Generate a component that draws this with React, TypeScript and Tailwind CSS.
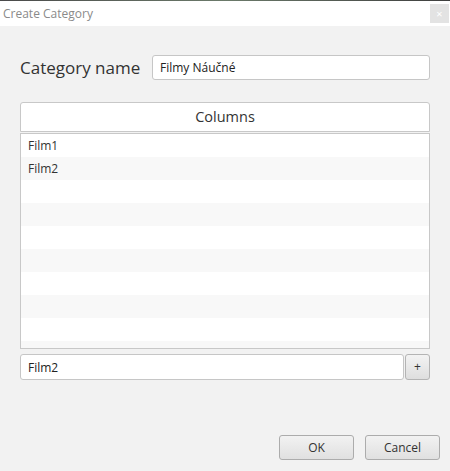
import React, { useState } from 'react';

const rows = ['Film1', 'Film2', '', '', '', '', '', '', '', ''];

export default function App() {
  const [name, setName] = useState('Filmy Náučné');
  const [column, setColumn] = useState('Film2');

  return (
    <div
      className="w-[450px] h-[471px] bg-[#f2f2f2] flex flex-col overflow-hidden"
      style={{ fontFamily: '"Open Sans", "Noto Sans", sans-serif' }}
    >
      {/* window chrome */}
      <div className="h-px bg-gradient-to-r from-[#4a4a4a] via-[#6b7a6a] to-[#3e3e3e]" />
      <div className="h-[25px] bg-white flex items-center justify-between pl-[3px] pr-px">
        <span className="text-[12px] text-[#8a8a8a]">Create Category</span>
        <button className="w-[19px] h-[19px] bg-[#e3e3e3] text-white text-[11px] leading-none flex items-center justify-center">
          ×
        </button>
      </div>

      <div className="flex-1 flex flex-col px-[20px] pt-[29px]">
        <div className="flex items-center h-[25px]">
          <label className="w-[132px] text-[17px] text-[#333] leading-none">Category name</label>
          <input
            value={name}
            onChange={(e) => setName(e.target.value)}
            className="flex-1 h-[25px] bg-white border border-[#c6c6c6] rounded-[3px] px-[7px] text-[12px] text-[#222] outline-none"
          />
        </div>

        <div className="mt-[22px] h-[30px] bg-white border border-[#c8c8c8] rounded-t-[3px] flex items-center justify-center text-[14.5px] text-[#333]">
          Columns
        </div>
        <div className="mt-px h-[216px] bg-white border border-[#c8c8c8] overflow-hidden">
          {rows.map((r, i) => (
            <div
              key={i}
              className={`h-[23px] px-[7px] flex items-center text-[12px] text-[#333] ${
                i % 2 === 1 ? 'bg-[#f8f8f8]' : 'bg-white'
              }`}
            >
              {r}
            </div>
          ))}
        </div>

        <div className="mt-[5px] flex h-[26px] gap-px">
          <input
            value={column}
            onChange={(e) => setColumn(e.target.value)}
            className="flex-1 h-[26px] bg-white border border-[#c6c6c6] rounded-[3px] px-[7px] text-[12px] text-[#222] outline-none"
          />
          <button className="w-[25px] h-[26px] border border-[#b4b4b4] rounded-[3px] bg-gradient-to-b from-[#f3f3f3] to-[#dedede] text-[12px] text-[#333] leading-none flex items-center justify-center">
            +
          </button>
        </div>

        <div className="mt-auto mb-[11px] flex justify-end gap-[11px] -mr-[10px]">
          <button className="w-[75px] h-[25px] border border-[#acacac] rounded-[3px] bg-gradient-to-b from-[#f2f2f2] to-[#e0e0e0] text-[12px] text-[#333]">
            OK
          </button>
          <button className="w-[75px] h-[25px] border border-[#acacac] rounded-[3px] bg-gradient-to-b from-[#f2f2f2] to-[#e0e0e0] text-[12px] text-[#333]">
            Cancel
          </button>
        </div>
      </div>
    </div>
  );
}
